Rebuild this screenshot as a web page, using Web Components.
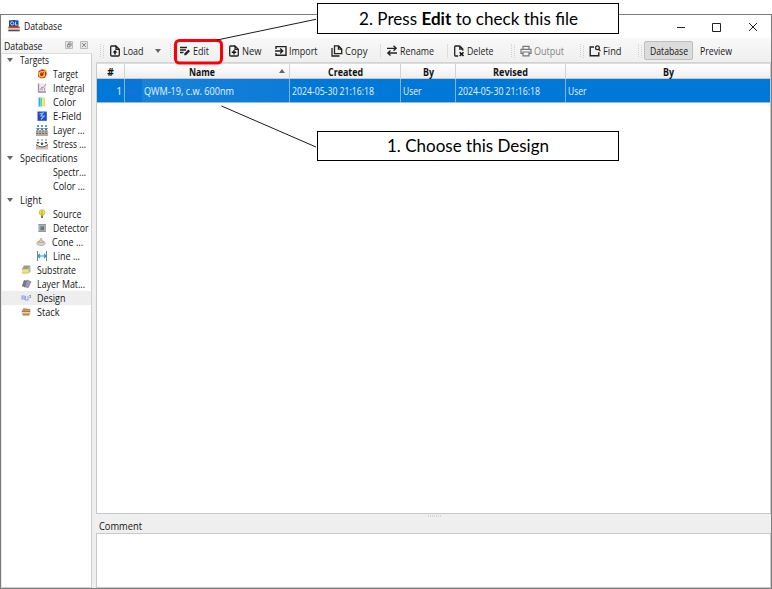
<!DOCTYPE html>
<html lang="en">
<head>
<meta charset="utf-8">
<title>Database</title>
<style>
html,body{margin:0;width:772px;height:589px;overflow:hidden;background:#fff}
body{font:10.2px/14px "Open Sans","Noto Sans",sans-serif;color:#151515;position:relative}
</style>
</head>
<body>
<database-window></database-window>
<call-out style="left:317px;top:3px" h="31"><fit-text w="219">2. Press <b>Edit</b> to check this file</fit-text></call-out>
<call-out style="left:317px;top:131px" h="30"><fit-text w="162">1. Choose this Design</fit-text></call-out>
<callout-lines></callout-lines>
<script>
const define = (name, markup, ready) => customElements.define(name, class extends HTMLElement {
  connectedCallback() {
    if (this.shadowRoot) return;
    const root = this.attachShadow({ mode: 'open' });
    root.innerHTML = typeof markup === 'function' ? markup(this) : markup;
    if (ready) ready(this, root);
  }
});

const page = (inner) => `<path d="M7 1H2.6Q1.7 1 1.7 2V10Q1.7 11 2.7 11H9.3Q10.3 11 10.3 10V4.2L7 1V4.3H10" fill="none" stroke="#222" stroke-width="1.3"/>${inner}`;
const icons = {
  load: page('<path d="M6 5L3.6 7.5H5.2V9.4H6.8V7.5H8.4Z" fill="#111"/>'),
  edit: '<path d="M1 2.5H8M1 5H7M1 7.5H4.5" stroke="#222" stroke-width="1.4"/><path d="M5.3 10.3V8.6L9.4 4.6L11 6.2L7 10.3Z" fill="#222"/>',
  new: page('<path d="M6 5V9.4M3.8 7.2H8.2" stroke="#111" stroke-width="1.4"/>'),
  import: '<path d="M1 4V1.6H11V10.2H1V8M0 6H7.4M5.2 3.6L7.7 6L5.2 8.4" fill="none" stroke="#222" stroke-width="1.4"/>',
  copy: '<path d="M3.5 .9H7.6L10.7 4V8.6H3.5ZM7.4 1V4.2H10.5M1 3V11H8.5" fill="none" stroke="#222" stroke-width="1.3"/>',
  rename: '<path d="M1 3.3H10M7.5 .8L10.2 3.3L7.5 5.8M11 8H2M4.5 5.6L1.8 8L4.5 10.5" fill="none" stroke="#222" stroke-width="1.3"/>',
  delete: '<path d="M6.8 1H2.5Q1.7 1 1.7 2V10Q1.7 11 2.5 11H5.2M6.8 1L9.8 4V5.8M6.8 1V4.2H9.6" fill="none" stroke="#222" stroke-width="1.3"/><path d="M6.7 7.3L10.5 11M10.5 7.3L6.7 11" stroke="#111" stroke-width="1.6"/>',
  output: '<path d="M3 4V1.3H9V4M3 8.4H1V4.3H11V8.4H9M3 7H9V10.8H3Z" fill="none" stroke="#777" stroke-width="1.2"/>',
  find: '<path d="M5 2H1.2V10.8H9.8V7.3" fill="none" stroke="#222" stroke-width="1.4"/><circle cx="8.4" cy="2.8" r="1.9" fill="none" stroke="#222" stroke-width="1.2"/><path d="M9.6 4.2L11.4 6" stroke="#222" stroke-width="1.3"/>',
  logo: '<path d="M1 .6Q6 -.6 10.5 .6V7H1Z" fill="#164b9b"/><circle cx="4.2" cy="3.4" r="1.6" stroke="#c5dcf2" fill="none"/><path d="M7.8 1.6L7.2 5H9.5" stroke="#c5dcf2" fill="none"/><path d="M.3 6.5H11.7V8.3H.3Z" fill="#e83743"/><path d="M.3 8.3H11.7V9.8H.3Z" fill="#f2c63b"/><path d="M.3 9.8H11.7V11.3H.3Z" fill="#3445a5"/>',
  target: '<path d="M2.5 3L6 1.2L10 2L10.8 6L9 9.8L5 10.6L2 8.5Z" fill="#d92d20"/><circle cx="5.8" cy="6.3" r="2.6" fill="none" stroke="#f5d438" stroke-width="1.3"/><path d="M7 5L10.3 1.8" stroke="#f2c72c" stroke-width="1.6"/><path d="M5.3 6.8L8 4.2" stroke="#644"/>',
  integral: '<path d="M2 1.5H10V10.5H2Z" fill="#eee6ee"/><path d="M2.5 1.5V10H10" fill="none" stroke="#9b8eae" stroke-width="1.3"/><path d="M4 8L6 5L7 6L10 2M6 8.5V5M8.5 8.5V6" fill="none" stroke="#b598aa"/>',
  color: '<path d="M2.5 1.5H4.5V10.5H2.5Z" fill="#4aa0f4"/><path d="M4.5 1.5H6V10.5H4.5Z" fill="#28eab2"/><path d="M6 1.5H7.8V10.5H6Z" fill="#f7f247"/><path d="M7.8 1.5H8.7V10.5H7.8Z" fill="#f7b377"/>',
  field: '<path d="M1.5 1.5H10.8V10.8H1.5Z" fill="#2448c8"/><path d="M3.5 4L7 3L5 6H8L5 9.5" stroke="#80c5f2" stroke-width="1.2" fill="none"/>',
  layer: '<path d="M0 6.5H12V12H0Z" fill="#b9aa9e"/><path d="M0 7H12M0 9.5H12" stroke="#5c7476" stroke-dasharray="2 1"/><path d="M2 1V5M6 1V5M10 1V5" stroke="#56a1bb" stroke-width="2" stroke-dasharray="2 1"/><path d="M.5 4.2L2 6L3.5 4.2M4.5 4.2L6 6L7.5 4.2M8.5 4.2L10 6L11.5 4.2" fill="none" stroke="#456b76"/>',
  stress: '<path d="M0 6.5Q6 11.5 12 6.5V11.6H0Z" fill="#d3bab2"/><path d="M0 6.5Q6 11.5 12 6.5" fill="none" stroke="#555"/><path d="M2 1V5M6 1V6M10 1V5" stroke="#90a4ae" stroke-width="1.3" stroke-dasharray="2 1"/><path d="M1 4L2 5.5L3 4M5 5L6 7L7 5M9 4L10 5.5L11 4" stroke="#333" fill="none"/>',
  source: '<circle cx="6" cy="4.5" r="2.8" fill="#efe83b" stroke="#b5a73a" stroke-width=".7"/><path d="M6 3V7" stroke="#a79a2a" stroke-width=".8"/><path d="M5 7.5H7V10H5Z" fill="#786f69"/>',
  detector: '<path d="M2.5 2H10V10H2.5Z" fill="#a6adb0"/><path d="M4.5 4.5H8V8H4.5Z" fill="#567b8b"/><path d="M2.5 2.5H10M2.5 9.5H10" stroke="#999"/>',
  cone: '<ellipse cx="6" cy="7.3" rx="4.2" ry="2.2" fill="#ddd7d1" stroke="#aaa59f" stroke-width=".8"/><path d="M6 2L3.5 6.8H8.5Z" fill="#e5c5a0" stroke="#b39a8b" stroke-width=".7"/>',
  line: '<path d="M1.5 1V11M10.5 1V11" stroke="#778188"/><path d="M2 6H10M4 4L2 6L4 8M8 4L10 6L8 8" stroke="#1698de" stroke-width="1.1" fill="none"/>',
  substrate: '<path d="M4 1.5H10.5L8.5 5H2Z" fill="#9b9b94"/><path d="M2 5H8.5V9.8H2Z" fill="#ddd66a"/><path d="M8.5 5L10.5 2V7.5L8.5 9.8Z" fill="#b3b69b"/><path d="M2 7H8.5" stroke="#f4f1a5"/>',
  material: '<path d="M4 2L8 3L5 9.5L1.8 8Z" fill="#777588"/><path d="M7 2L11 3.8L8 9.8L4.8 8.5Z" fill="#9f9ab3" stroke="#6f6b82" stroke-width=".6"/>',
  design: '<path d="M2 3.5V8M2 4H4.2V8M2 6H4M5.5 4V8H8V4M9 3.5H10.5V5.5H9" stroke="#94a4ec" stroke-width="1.1" fill="none"/>',
  stack: '<path d="M3.5 2.3L10.3 3V4.8H1.8Z" fill="#b58b59"/><path d="M1.8 4.8H10.3V6.2H1.8Z" fill="#c9694a"/><path d="M1.8 6.2H10.3V7.6H1.8Z" fill="#efd660"/><path d="M1.8 7.6H10.3L9 9.4H3Z" fill="#a7855a"/>'
};
define('ui-icon', el => `<style>:host{display:block;flex:none;width:12px;height:12px}svg{display:block;width:100%;height:100%}</style><svg viewBox="0 0 12 12">${icons[el.getAttribute('name')] || ''}</svg>`);

define('call-out', el => `<style>:host{position:absolute;box-sizing:border-box;width:302px;height:${el.getAttribute('h')}px;border:1px solid #000;background:#fff;display:flex;justify-content:center;align-items:center;font:16.6px/24px Lato,sans-serif;color:#000}</style><slot></slot>`);
define('callout-lines', `<style>:host{position:absolute;left:0;top:0;pointer-events:none}svg{display:block}</style>
<svg width="772" height="589"><g fill="none"><rect x="175.5" y="40.5" width="46" height="22.5" rx="4" stroke="#fb0007" stroke-width="3"/><path d="M217 40L316 19.3M221.5 106L316 147" stroke="#1b1b1b"/></g></svg>`);

define('drag-handle', `<style>:host{display:block;flex:none;width:4px;height:14px}svg{display:block}</style><svg width="4" height="14"><path d="M.5 0V14M3.5 1V14" stroke="#d0d0d0" stroke-dasharray="1 1"/></svg>`);
// Tool button: gap is the free space on its left.
define('tool-button', el => `<style>:host{display:flex;flex:none;align-items:center;height:18px;gap:2px;margin-left:${el.getAttribute('gap')}px;color:${el.hasAttribute('off') ? '#858585' : '#1b1b1b'}}</style>
<ui-icon name="${el.getAttribute('icon')}"></ui-icon><fit-text w="${el.getAttribute('w')}"><slot></slot></fit-text>`);
define('tool-bar', `<style>:host{display:flex;align-items:center;height:25px;padding:1px 0 0 4px;box-sizing:border-box;border-bottom:1px solid #d2d2d2}
.s{width:1px;height:14px;background:#dedede;flex:none}.a{border:3.5px solid transparent;border-top:4px solid #666;border-bottom:0;margin:0 9px 0 11px}
.on{box-sizing:border-box;margin-left:2px;width:49px;height:19px;border:1px solid #bdbdbd;border-radius:2px;background:#dcdcdc;display:flex;align-items:center;justify-content:center}</style>
<drag-handle></drag-handle><tool-button icon="load" gap="5" w="20.5">Load</tool-button><i class="a"></i><drag-handle></drag-handle>
<tool-button icon="edit" gap="5" w="16">Edit</tool-button><tool-button icon="new" gap="19.5" w="19.5">New</tool-button>
<tool-button icon="import" gap="13" w="28.5">Import</tool-button><tool-button icon="copy" gap="13.5" w="22.5">Copy</tool-button>
<i class="s" style="margin-left:13px"></i><tool-button icon="rename" gap="5" w="34">Rename</tool-button>
<i class="s" style="margin-left:13px"></i><tool-button icon="delete" gap="5" w="26.5">Delete</tool-button>
<drag-handle style="margin-left:17px"></drag-handle><tool-button off icon="output" gap="5" w="30">Output</tool-button>
<drag-handle style="margin-left:16px"></drag-handle><tool-button icon="find" gap="5" w="18.5">Find</tool-button>
<drag-handle style="margin-left:17px"></drag-handle><div class="on"><fit-text w="38">Database</fit-text></div><fit-text w="32" style="margin-left:6.5px">Preview</fit-text>`);

define('tree-row', el => {
  const x = +el.getAttribute('x'), ic = el.getAttribute('icon'), g = el.hasAttribute('group');
  return `<style>:host{display:flex;align-items:center;height:14px;box-sizing:border-box;background:${el.hasAttribute('selected') ? '#eee' : 'none'}}
  .l{width:${x - 2}px;flex:none;display:flex;align-items:center;justify-content:${g ? 'flex-start' : 'flex-end'}}
  i{border:3px solid transparent;border-top:4px solid #666;border-bottom:0;margin-left:4.5px}ui-icon{margin-right:5px}</style>
  <div class="l">${g ? '<i></i>' : ic ? `<ui-icon name="${ic}"></ui-icon>` : ''}</div><fit-text w="${el.getAttribute('w')}"><slot></slot></fit-text>`;
});
const rows = [
  ['Targets',20,29,'','group'],['Target',52.5,25,'target'],['Integral',53,31.5,'integral'],['Color',53,23,'color'],['E-Field',53,28.5,'field'],
  ['Layer ...',53,31.5,'layer'],['Stress ...',53,33,'stress'],['Specifications',20,57.5,'','group'],['Spectr...',53,33,''],['Color ...',53,32,''],
  ['Light',20,21.5,'','group'],['Source',53,28.5,'source'],['Detector',53,35.5,'detector'],['Cone ...',52,31,'cone'],['Line ...',53,27,'line'],
  ['Substrate',37,39,'substrate'],['Layer Mat...',36.5,48,'material'],['Design',37,28.5,'design','selected'],['Stack',37,22.5,'stack']];
define('side-dock', `<style>:host{display:flex;flex-direction:column;width:90.5px;flex:none}
header{display:flex;align-items:center;height:15px;padding-left:3px;box-sizing:border-box}
header svg{display:block;margin-left:21px}main{flex:1;border:1px solid #cfcfcf;border-top-color:#ddd;border-left-color:#e5e5e5;background:#fff;box-sizing:border-box;overflow:hidden}
tree-row:first-child{margin-top:-1px}</style>
<header><fit-text w="38.5">Database</fit-text><svg width="24" height="11"><g fill="#e6e6e6" stroke="#bbb"><path d="M1.5 1.5H8.5V8.5H1.5ZM16.5 1.5H23.5V8.5H16.5Z"/></g><path d="M3.5 4.5H6V7H3.5ZM4.5 4V3H7V6M18 3L22 7M22 3L18 7" fill="none" stroke="#888"/></svg></header>
<main>${rows.map(r => `<tree-row x="${r[1]}" w="${r[2]}" icon="${r[3]}" ${r[4] || ''}>${r[0]}</tree-row>`).join('')}</main>`);

define('design-table', `<style>:host{display:block;height:451px;box-sizing:border-box;border:1px solid #c9c9c9;border-top-color:#ddd;background:#fff}
.r{display:grid;grid-template-columns:28px 165px 111px 55px 110px 1fr;box-sizing:border-box}
.r>div{display:flex;align-items:center;box-sizing:border-box;border-right:1px solid #d3d3d3}.r>div:last-child{border-right:0}
.h{height:15px;background:linear-gradient(#fff,#eee);border-bottom:1px solid #c7c7c7;font-weight:700;color:#111}.h>div{justify-content:center;position:relative;padding-top:1px}
.b{height:24px;background:#0078d7;color:#e9f3fc;border-bottom:1px solid #8ebce3}.b>div{border-color:#7fb4e2;padding-left:2px}
.a{position:absolute;right:4px;top:5px;border:3px solid transparent;border-bottom:4px solid #666;border-top:0}
.b>.n{justify-content:flex-end;padding-right:2px}.b>.q{padding-left:4px;background:linear-gradient(90deg,#0876d6 17px,#1683db 17px,#0c7bd7)}</style>
<div class="r h"><div>#</div><div style="padding-right:11px"><fit-text w="26">Name</fit-text><i class="a"></i></div><div><fit-text w="35">Created</fit-text></div><div><fit-text w="11">By</fit-text></div><div><fit-text w="35">Revised</fit-text></div><div><fit-text w="11">By</fit-text></div></div>
<div class="r b"><div class="n">1</div><div class="q"><svg width="10" height="10" style="flex:none;margin-right:5px"><path d="M1 3V8M1 5H4M4 3V8M6 3V7H8V3" stroke="#246ce0" fill="none"/></svg><fit-text w="90">QWM-19, c.w. 600nm</fit-text></div><div><fit-text w="82">2024-05-30 21:16:18</fit-text></div><div><fit-text w="18.5">User</fit-text></div><div><fit-text w="82">2024-05-30 21:16:18</fit-text></div><div><fit-text w="18.5">User</fit-text></div></div>`);

define('database-window', `<style>:host{position:absolute;top:14px;left:0;display:flex;flex-direction:column;box-sizing:border-box;width:772px;height:575px;border:1px solid #7c7c7c;background:#f0f0f0}
.t{height:23px;display:flex;align-items:center;background:#fff;padding-left:6.5px;flex:none}
.t>ui-icon{margin-top:-1px}.t fit-text{margin:-1px 0 0 4px}
.t svg{display:block;margin-left:auto;margin-right:13px}
.c{flex:1;display:flex;min-height:0;background:linear-gradient(#f8f8f8,#efefef 25px)}
.m{flex:1;display:flex;flex-direction:column;margin-left:4.5px;min-width:0}
.g{height:19px;display:flex;flex-direction:column;justify-content:flex-end;position:relative;padding-left:3px;flex:none}
.g i{position:absolute;left:332px;top:1px;width:14px;height:2px;background:repeating-linear-gradient(90deg,#d6d6d6 0 1px,transparent 1px 2px)}
.k{flex:1;background:#fff;border:1px solid #c9c9c9}</style>
<div class="t"><ui-icon name="logo"></ui-icon><fit-text w="38">Database</fit-text>
<svg width="82" height="12"><path d="M1 6.5H9M36.5 2.5H44.5V10.5H36.5ZM73 2L81 10M81 2L73 10" fill="none" stroke="#222"/></svg></div>
<div class="c"><side-dock></side-dock><div class="m"><tool-bar></tool-bar><design-table></design-table><div class="g"><i></i><fit-text w="43">Comment</fit-text></div><div class="k"></div></div></div>`);

// Text condensed or widened to a fixed advance width. Registered last, so that
// every surrounding element has already set its font when the text is measured.
define('fit-text', el => `<style>:host{display:block;flex:none;width:${el.getAttribute('w')}px;white-space:nowrap}
span{display:inline-block;transform-origin:0 50%}</style><span><slot></slot></span>`, (el, root) => {
  const s = root.querySelector('span');
  const wide = s.getBoundingClientRect().width;
  if (wide) s.style.transform = `scaleX(${el.getAttribute('w') / wide})`;
});
</script>
</body>
</html>
